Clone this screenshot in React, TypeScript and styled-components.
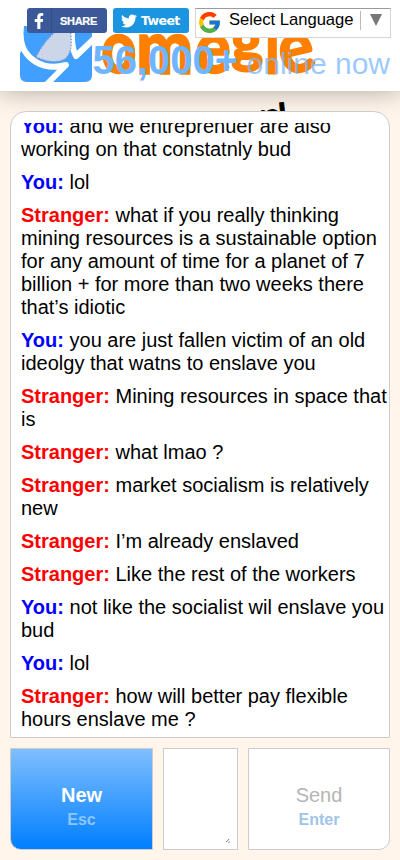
import styled, { createGlobalStyle } from 'styled-components';
import { FaFacebookF, FaTwitter } from 'react-icons/fa';
import { FcGoogle } from 'react-icons/fc';

const GlobalStyle = createGlobalStyle`
  * {
    box-sizing: border-box;
  }
  body {
    margin: 0;
    background: #fff5eb;
    font-family: "Liberation Sans", Arial, sans-serif;
    color: #000;
  }
`;

const Page = styled.div`
  display: flex;
  flex-direction: column;
  height: 860px;
  overflow: hidden;
`;

const Header = styled.header`
  position: relative;
  display: flex;
  justify-content: flex-end;
  flex: none;
  height: 91px;
  padding: 37px 10px 0 0;
  background: #fff;
  box-shadow: 0 0 25px rgba(0, 0, 0, 0.33);
`;

const Logo = styled.svg`
  position: absolute;
  left: 0;
  top: 0;
  font-family: Lato, sans-serif;
  font-weight: 900;
`;

const OnlineCount = styled.div`
  position: relative;
  height: 46px;
  line-height: 46px;
  font-size: 30px;
  color: rgba(122, 184, 255, 0.75);
  white-space: nowrap;

  strong {
    font-size: 40px;
    color: #6fb5ff;
  }
`;

const Tools = styled.div` // share buttons and language menu
  position: absolute;
  left: 27px;
  top: 8px;
  display: flex;
  align-items: flex-start;
  gap: 6px;
`;

const ShareButton = styled.div<{ $color: string; $width: number }>`
  display: flex;
  align-items: center;
  width: ${(p) => p.$width}px;
  height: 25px;
  border-radius: 3px;
  background: ${(p) => p.$color};
  color: #fff;
  font-weight: bold;
  overflow: hidden;
`;

const FacebookMark = styled.span`
  display: flex;
  align-items: center;
  justify-content: center;
  width: 25px;
  height: 25px;
  border-right: 1px solid #344e86;
`;

const TwitterMark = styled(FaTwitter)`
  margin-left: 8px;
`;

const ShareText = styled.span`
  margin-left: 8px;
  font: bold 11px "Liberation Sans", sans-serif;
  letter-spacing: -0.3px;
  -webkit-text-stroke: 0.2px #fff;
`;

const TweetText = styled.span`
  margin-left: 4px;
  font: bold 12.5px "DejaVu Sans", sans-serif;
  letter-spacing: -0.6px;
`;

const Language = styled.div`
  display: flex;
  align-items: flex-start;
  width: 196px;
  height: 30px;
  padding: 1px 0 0 1px;
  border: 1px solid #d5d5d5;
  border-top-color: #9b9b9b;
  background: #fff;
  font-size: 16.6px;
  line-height: 20px;
  white-space: nowrap;
`;

const LanguageName = styled.span`
  width: 131px;
  margin-left: 7px;
`;

const Arrow = styled.span`
  height: 19px;
  margin-top: 1px;
  padding-left: 9px;
  border-left: 1px solid #bbb;

  &::before {
    content: '';
    display: block;
    margin-top: 3px;
    border: 6px solid transparent;
    border-top: 12px solid #767676;
    border-bottom: 0;
  }
`;

const Main = styled.main`
  position: relative;
  display: flex;
  flex-direction: column;
  gap: 10px;
  height: 769px;
  padding: 20px 10px 10px;
`;

const Tagline = styled.div`
  position: absolute;
  right: 115px;
  top: 3px;
  font: 900 30px/36px Lato, sans-serif;
  transform: rotate(-6deg);
  transform-origin: right top;
  -webkit-text-stroke: 1px #000;
`;

const Log = styled.section`
  position: relative;
  height: 627px;
  padding: 11px 0 6px 10px;
  border: 1px solid #ccc;
  border-radius: 16px 16px 0 0;
  background: #fff;
`;

const Messages = styled.div`
  display: flex;
  flex-direction: column;
  justify-content: flex-end;
  gap: 10px;
  height: 100%;
  overflow: hidden;
`;

const Message = styled.p`
  flex: none;
  margin: 0;
  font-size: 20px;
  line-height: 23px;
`;

const Name = styled.strong<{ $you: boolean }>`
  color: ${(p) => (p.$you ? '#00f' : '#f00')};
`;

const Controls = styled.div`
  display: grid;
  grid-template-columns: 143px 75px 142px;
  gap: 10px;
  height: 102px;
`;

const Button = styled.button<{ $primary?: boolean }>`
  display: flex;
  flex-direction: column;
  align-items: center;
  padding: 35px 0 0;
  border: 1px solid #ccc;
  border-radius: ${(p) => (p.$primary ? '0 0 0 11px' : '0 0 11px 0')};
  background: ${(p) => (p.$primary ? 'linear-gradient(#80bfff, #007fff)' : '#fff')};
  color: ${(p) => (p.$primary ? '#fff' : '#b5b5b5')};
  font-family: inherit;
  font-size: 20px;
  line-height: 23px;
  font-weight: ${(p) => (p.$primary ? 'bold' : 'normal')};

  small {
    margin-top: 1px;
    font-size: 16px;
    font-weight: bold;
    color: ${(p) => (p.$primary ? '#8dc6ff' : '#a0c4ea')};
  }
`;

const Input = styled.div`
  display: flex;
  align-items: flex-end;
  justify-content: flex-end;
  padding: 0 7px 6px 0;
  border: 1px solid #ccc;
  background: #fff;
`;

const log = [
  { you: true, text: 'and we entreprenuer are also working on that constatnly bud' },
  { you: true, text: 'lol' },
  { you: false, text: 'what if you really thinking mining resources is a sustainable option for any amount of time for a planet of 7 billion + for more than two weeks there that’s idiotic' },
  { you: true, text: 'you are just fallen victim of an old ideolgy that watns to enslave you' },
  { you: false, text: 'Mining resources in space that is' },
  { you: false, text: 'what lmao ?' },
  { you: false, text: 'market socialism is relatively new' },
  { you: false, text: 'I’m already enslaved' },
  { you: false, text: 'Like the rest of the workers' },
  { you: true, text: 'not like the socialist wil enslave you bud' },
  { you: true, text: 'lol' },
  { you: false, text: 'how will better pay flexible hours enslave me ?' },
];

function OmegleLogo() {
  return (
    <Logo width="330" height="91" viewBox="0 0 330 91">
      <path d="M24 26Q22 40 28 53Q20 47 20 55V75Q20 82 27 82H85Q92 82 92 75V26Z" fill="#409fff" />
      <path d="M19 36C24 61 44 71 66 65L47 84" fill="none" stroke="#fff" strokeWidth="6" strokeLinejoin="round" />
      <path d="M72 28Q71 48 76 56L97 36" fill="none" stroke="#fff" strokeWidth="6" strokeLinejoin="round" />
      <path d="M36 57Q45 39 59 29H70Q74 52 65 59Q54 65 36 57Z" fill="#ccd6e9" stroke="#8098cc" strokeWidth="1.3" strokeDasharray="1.5 1.5" />
      <g fill="#ff8000" stroke="#ff8000" strokeWidth="1.4">
        <text transform="translate(101 73) scale(.8 .97)" fontSize="77">o</text>
        <text transform="translate(136 74) scale(.86 .97)" fontSize="79">m</text>
        <text transform="translate(195 73) scale(.87 .97)" fontSize="77">e</text>
        <text transform="translate(231 61) scale(1 .97)" fontSize="61">g</text>
        <text transform="translate(265 74) scale(.7 .8)" fontSize="82">l</text>
        <text transform="translate(284 76) rotate(-14) scale(.87 .97)" fontSize="76">e</text>
      </g>
    </Logo>
  );
}

function App() {
  return (
    <Page>
      <GlobalStyle />
      <Header>
        <OmegleLogo />
        <OnlineCount><strong>56,000+</strong> online now</OnlineCount>
        <Tools>
          <ShareButton $color="#3b5998" $width={80}>
            <FacebookMark><FaFacebookF size={16} /></FacebookMark>
            <ShareText>SHARE</ShareText>
          </ShareButton>
          <ShareButton $color="#1b95e0" $width={76}>
            <TwitterMark size={16} />
            <TweetText>Tweet</TweetText>
          </ShareButton>
          <Language>
            <FcGoogle size={25} />
            <LanguageName>Select Language</LanguageName>
            <Arrow />
          </Language>
        </Tools>
      </Header>
      <Main>
        <Tagline>Talk to strangers!</Tagline>
        <Log>
          <Messages>
            {log.map((message, i) => (
              <Message key={i}>
                <Name $you={message.you}>{message.you ? 'You:' : 'Stranger:'}</Name> {message.text}
              </Message>
            ))}
          </Messages>
        </Log>
        <Controls>
          <Button $primary>New<small>Esc</small></Button>
          <Input>
            <svg width="4" height="4" viewBox="0 0 5 5" stroke="#555">
              <path d="M0 4L4 0M3 5L5 3" />
            </svg>
          </Input>
          <Button>Send<small>Enter</small></Button>
        </Controls>
      </Main>
    </Page>
  );
}

export default App;
